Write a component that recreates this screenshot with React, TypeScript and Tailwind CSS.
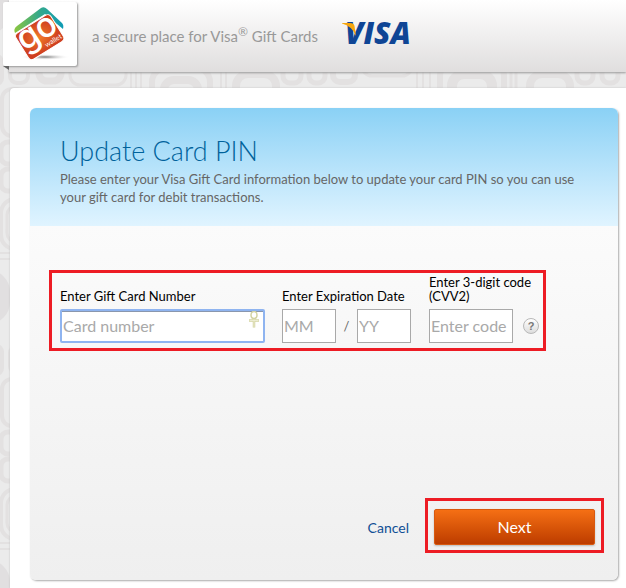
import { useState } from "react";

interface TextFieldProps {
  id: string;
  label: string;
  placeholder: string;
  value: string;
  onChange: (value: string) => void;
  className: string;
  autoFocus?: boolean;
}

function TextField({
  id,
  label,
  placeholder,
  value,
  onChange,
  className,
  autoFocus,
}: TextFieldProps) {
  return (
    <input
      id={id}
      aria-label={label}
      type="text"
      placeholder={placeholder}
      value={value}
      autoFocus={autoFocus}
      onChange={(e) => onChange(e.target.value)}
      className={`h-[34px] border bg-white pb-0.5 pl-px text-base text-gray-700 outline-none placeholder:text-[#a9a9a9] ${className}`}
    />
  );
}

// Rounded-square wallpaper behind the whole page
function Wallpaper() {
  return (
    <svg
      aria-hidden="true"
      className="absolute inset-0 -z-10 h-full w-full"
    >
      <defs>
        <pattern
          id="tiles"
          width="640"
          height="290"
          patternUnits="userSpaceOnUse"
        >
          <rect width="640" height="290" fill="#ebebeb" />
          <g fill="none" stroke="#e3e1e1" strokeWidth="4">
            <rect x="2" y="89" width="24" height="47" rx="10" />
            <rect x="1" y="142" width="24" height="22" rx="7" strokeWidth="5" />
            <rect x="1" y="169" width="24" height="22" rx="7" strokeWidth="5" />
            <rect x="1" y="199" width="60" height="50" rx="14" />
            <rect x="7" y="206" width="48" height="36" rx="9" strokeWidth="3" />
            <path d="M0 253H640M0 259H640" strokeWidth="2" />
            <rect x="-20" y="56" width="22" height="28" rx="6" />
            <rect x="10" y="56" width="18" height="27" rx="7" />
            <rect x="39" y="56" width="22" height="25" rx="8" strokeWidth="7" />
            <rect x="70" y="48" width="56" height="37" rx="10" strokeWidth="3" />
            <path d="M131 0V100M136 0V100M141 0V100" strokeWidth="2" />
            <rect x="152" y="68" width="58" height="60" rx="14" strokeWidth="6" />
            <rect x="164" y="80" width="34" height="40" rx="10" strokeWidth="8" />
            <path d="M221 0V100M226 0V100" strokeWidth="2" />
            <rect x="236" y="74" width="40" height="60" rx="12" strokeWidth="8" />
            <rect x="283" y="58" width="18" height="25" rx="7" strokeWidth="5" />
            <rect x="309" y="58" width="16" height="25" rx="7" strokeWidth="5" />
            <rect x="333" y="58" width="22" height="24" rx="7" strokeWidth="6" />
            <rect x="362" y="40" width="50" height="36" rx="10" strokeWidth="3" />
            <path d="M417 0V100M423 0V100M430 0V100" strokeWidth="2" />
            <rect x="440" y="62" width="64" height="60" rx="14" strokeWidth="6" />
            <rect x="452" y="74" width="40" height="40" rx="12" strokeWidth="10" />
            <path d="M511 0V100M516 0V100" strokeWidth="3" />
            <rect x="530" y="74" width="40" height="60" rx="12" strokeWidth="8" />
            <rect x="577" y="58" width="16" height="25" rx="7" strokeWidth="5" />
            <rect x="602" y="58" width="16" height="25" rx="7" strokeWidth="5" />
          </g>
          <rect x="-36" y="270" width="46" height="54" rx="22" fill="#e1dfe0" />
          <rect x="-36" y="-20" width="46" height="54" rx="22" fill="#e1dfe0" />
        </pattern>
      </defs>
      <rect width="100%" height="100%" fill="url(#tiles)" />
    </svg>
  );
}

function GoWalletLogo() {
  return (
    <svg
      viewBox="0 0 74 64"
      role="img"
      aria-label="go wallet"
      className="h-16 w-[74px] overflow-visible"
    >
      <defs>
        <linearGradient id="backCard" x1="0" y1="0" x2="1" y2="0">
          <stop offset="0" stopColor="#8cc63f" />
          <stop offset="0.5" stopColor="#35a98a" />
          <stop offset="1" stopColor="#0e9bb5" />
        </linearGradient>
        <radialGradient id="frontCard">
          <stop offset="0" stopColor="#f07a2a" />
          <stop offset="1" stopColor="#cf3f20" />
        </radialGradient>
        <radialGradient id="cardShadow">
          <stop offset="0" stopColor="#777777" />
          <stop offset="1" stopColor="#ffffff" stopOpacity="0" />
        </radialGradient>
      </defs>
      <ellipse cx="42" cy="55" rx="25" ry="3" fill="url(#cardShadow)" />
      {/* Back card */}
      <path
        d="M12 31Q10 27 14 24L38 6Q41 4 44 7L59 21Q61 23 60 27L42 12Z"
        fill="url(#backCard)"
      />
      {/* Front card */}
      <g transform="rotate(-32 36 35)">
        <rect
          x="16"
          y="20"
          width="41"
          height="31"
          rx="4"
          fill="url(#frontCard)"
          stroke="#ffffff"
        />
        <text
          x="16"
          y="40"
          fill="#ffffff"
          className="font-['Inter'] text-[34px] font-medium"
        >
          go
        </text>
        <text
          x="37"
          y="48"
          fill="#ffffff"
          className="font-['Lato'] text-[7px]"
        >
          wallet
        </text>
      </g>
    </svg>
  );
}

function VisaLogo() {
  return (
    <svg
      viewBox="0 0 72 24"
      role="img"
      aria-label="Visa"
      className="h-6 w-[72px] overflow-visible"
    >
      <text
        x="3"
        y="22"
        fill="#0f4595"
        className="font-['Open_Sans'] text-[30px] font-extrabold italic"
      >
        VISA
      </text>
      <path d="M0 1H8Q12 1 12.500 4L14 14Q10 4 0 1.500Z" fill="#f7a70f" />
    </svg>
  );
}

// Key mark shown inside the card number box
function KeyMark() {
  return (
    <svg
      viewBox="0 0 12 17"
      aria-hidden="true"
      className="pointer-events-none absolute top-0.5 right-[5px] h-[17px] w-3"
      fill="none"
      stroke="#d3d3a0"
    >
      <ellipse cx="6" cy="4" rx="3" ry="3.500" strokeWidth="1.500" />
      <path d="M1 9.500H11M6 8V16.500" strokeWidth="2.500" />
      <path d="M1.500 9.500H10.500M6 8V16" stroke="#f2f2dc" strokeWidth="0.800" />
    </svg>
  );
}

function App() {
  const [cardNumber, setCardNumber] = useState("");
  const [month, setMonth] = useState("");
  const [year, setYear] = useState("");
  const [code, setCode] = useState("");

  return (
    <div className="relative isolate flex min-h-screen flex-col overflow-hidden font-['Lato',sans-serif]">
      <Wallpaper />

      {/* Header */}
      <header className="ml-[9px] flex h-[72px] items-start bg-linear-to-b from-white to-[#e0dede] shadow-[0_1px_2px_#999999]">
        <div className="relative mt-0.5 -ml-1.5 h-16 w-[74px] rounded-xs bg-white shadow-[1px_1px_2px_#999999]">
          <GoWalletLogo />
          <svg
            viewBox="0 0 6 4"
            aria-hidden="true"
            className="absolute top-full left-0 h-1 w-1.5"
          >
            <path d="M0 0H6V4Z" fill="#666666" />
          </svg>
        </div>
        <p className="mt-6 ml-[15px] text-[15px] leading-6 text-[#999999]">
          a secure place for Visa<sup className="text-xs">®</sup> Gift Cards
        </p>
        <div className="mt-[22px] ml-6">
          <VisaLogo />
        </div>
      </header>

      <main className="mt-4 ml-[10px] flex-1 rounded-tl-sm bg-white pt-5 pr-2 pb-2 pl-5 shadow-[0_0_2px_#bbbbbb]">
        <form
          onSubmit={(e) => e.preventDefault()}
          className="rounded-md bg-linear-to-b from-white to-[#efefef] shadow-[1px_1px_2px_#aaaaaa]"
        >
          <div className="rounded-t-md bg-linear-to-b from-[#8ad1f5] to-[#e0f4ff] px-[30px] pt-[26px] pb-5">
            <h1 className="pb-0.5 text-[27px] leading-[34px] font-light text-[#00629b]">
              Update Card PIN
            </h1>
            <p className="text-[13px] leading-[18px] text-[#666666]">
              Please enter your Visa Gift Card information below to update your
              card PIN so you can use your gift card for debit transactions.
            </p>
          </div>

          {/* Card details */}
          <div className="mt-11 ml-[19px] flex w-fit items-end border-3 border-[#ed1c24] pt-0.5 pr-1 pb-[5px] pl-2 text-[13px] leading-[14px] text-black">
            <div className="mr-[17px]">
              <label htmlFor="card-number">Enter Gift Card Number</label>
              <div className="relative mt-1.5">
                <TextField
                  id="card-number"
                  label="Enter Gift Card Number"
                  placeholder="Card number"
                  value={cardNumber}
                  onChange={setCardNumber}
                  autoFocus
                  className="w-[205px] rounded-xs border-2 border-[#8fb4f0] shadow-[inset_0_1px_0_#8a97ad]"
                />
                <KeyMark />
              </div>
            </div>
            <div className="mr-[18px]">
              <label htmlFor="month">Enter Expiration Date</label>
              <div className="mt-1.5 flex items-center">
                <TextField
                  id="month"
                  label="Expiration month"
                  placeholder="MM"
                  value={month}
                  onChange={setMonth}
                  className="w-[54px] border-[#a9a9a9]"
                />
                <span className="w-[21px] text-center text-[#666666]">/</span>
                <TextField
                  id="year"
                  label="Expiration year"
                  placeholder="YY"
                  value={year}
                  onChange={setYear}
                  className="w-[54px] border-[#a9a9a9]"
                />
              </div>
            </div>
            <div>
              <label htmlFor="code">
                Enter 3-digit code
                <br />
                (CVV2)
              </label>
              <div className="mt-1.5 flex items-center gap-[10px]">
                <TextField
                  id="code"
                  label="Enter 3-digit code (CVV2)"
                  placeholder="Enter code"
                  value={code}
                  onChange={setCode}
                  className="w-[84px] border-[#a9a9a9]"
                />
                <button
                  type="button"
                  className="size-4 rounded-full border border-[#b8b8b8] bg-linear-to-b from-white to-[#dddddd] font-['Liberation_Sans'] text-[11px] leading-[14px] font-bold text-[#777777]"
                >
                  ?
                </button>
              </div>
            </div>
          </div>

          {/* Actions */}
          <div className="mt-[147px] flex items-center justify-end gap-4 pr-[14px] pb-[27px]">
            <a href="#cancel" className="pt-1 text-sm text-[#0f4f95]">
              Cancel
            </a>
            <div className="border-3 border-[#ed1c24] px-1.5 pt-2 pb-[5px]">
              <button
                type="submit"
                className="block h-9 w-[161px] rounded-xs border border-[#d8590f] bg-linear-to-b from-[#f56f14] to-[#bd3c00] text-base text-white shadow-[0_1px_2px_#bbbbbb]"
              >
                Next
              </button>
            </div>
          </div>
        </form>
      </main>
    </div>
  );
}

export default App;
